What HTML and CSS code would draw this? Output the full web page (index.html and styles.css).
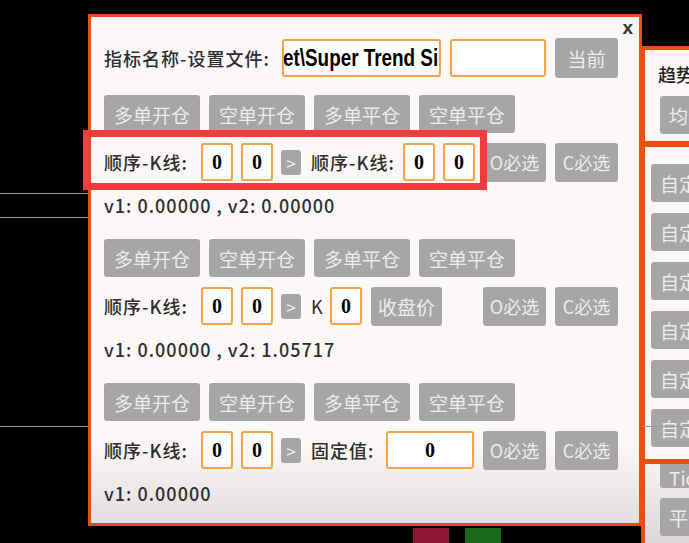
FILE: index.html
```html
<!DOCTYPE html>
<html lang="zh">
  <head>
    <meta charset="UTF-8" />
    <meta name="viewport" content="width=device-width, initial-scale=1.0" />
    <title>信号设置</title>
    <link rel="stylesheet" href="styles.css">
  </head>
  <body>
    <div class="grid-line gl-a"></div>
    <div class="grid-line gl-b"></div>
    <div class="grid-line gl-c"></div>
    <div class="candle down"></div>
    <div class="candle up"></div>

    <aside class="side side-top">
      <p class="side-title">趋势</p>
      <button class="btn side-btn">均线</button>
    </aside>

    <aside class="side side-mid">
      <button class="btn side-btn">自定义1</button>
      <button class="btn side-btn">自定义2</button>
      <button class="btn side-btn">自定义3</button>
      <button class="btn side-btn">自定义4</button>
      <button class="btn side-btn">自定义5</button>
      <button class="btn side-btn">自定义6</button>
    </aside>

    <aside class="side side-low">
      <button class="btn side-btn cut">Tick</button>
      <button class="btn side-btn">平仓</button>
    </aside>

    <main class="dlg">
      <span class="close">x</span>

      <div class="row head">
        <label class="lbl">指标名称-设置文件:</label>
        <div class="field path"><span>Market\Super Trend Signal</span></div>
        <div class="field blank"></div>
        <button class="btn">当前</button>
      </div>

      <section class="sec">
        <div class="row acts">
          <button class="btn act">多单开仓</button>
          <button class="btn act">空单开仓</button>
          <button class="btn act">多单平仓</button>
          <button class="btn act">空单平仓</button>
        </div>
        <div class="row cond">
          <label class="lbl seq">顺序-K线:</label>
          <div class="field num">0</div>
          <div class="field num">0</div>
          <button class="btn op">&gt;</button>
          <label class="lbl seq2">顺序-K线:</label>
          <div class="field num">0</div>
          <div class="field num">0</div>
          <button class="btn pick push">O必选</button>
          <button class="btn pick">C必选</button>
        </div>
        <p class="vals">v1: 0.00000 , v2: 0.00000</p>
      </section>

      <section class="sec">
        <div class="row acts">
          <button class="btn act">多单开仓</button>
          <button class="btn act">空单开仓</button>
          <button class="btn act">多单平仓</button>
          <button class="btn act">空单平仓</button>
        </div>
        <div class="row cond">
          <label class="lbl seq">顺序-K线:</label>
          <div class="field num">0</div>
          <div class="field num">0</div>
          <button class="btn op">&gt;</button>
          <label class="lbl kk">K</label>
          <div class="field num">0</div>
          <button class="btn close-price">收盘价</button>
          <button class="btn pick push">O必选</button>
          <button class="btn pick">C必选</button>
        </div>
        <p class="vals">v1: 0.00000 , v2: 1.05717</p>
      </section>

      <section class="sec">
        <div class="row acts">
          <button class="btn act">多单开仓</button>
          <button class="btn act">空单开仓</button>
          <button class="btn act">多单平仓</button>
          <button class="btn act">空单平仓</button>
        </div>
        <div class="row cond">
          <label class="lbl seq">顺序-K线:</label>
          <div class="field num">0</div>
          <div class="field num">0</div>
          <button class="btn op">&gt;</button>
          <label class="lbl fixed">固定值:</label>
          <div class="field num wide">0</div>
          <button class="btn pick push">O必选</button>
          <button class="btn pick">C必选</button>
        </div>
        <p class="vals">v1: 0.00000</p>
      </section>
    </main>

    <div class="mark"></div>
  </body>
</html>
```

FILE: styles.css
```css
* {
  margin: 0;
  padding: 0;
  box-sizing: border-box;
}

body {
  background-color: #000;
  width: 689px;
  height: 543px;
  overflow: hidden;
  position: relative;
  font-family: "Noto Sans CJK SC", "Noto Sans", sans-serif;
  color: #2b2b2b;
}

/* chart behind the windows */
.grid-line {
  position: absolute;
  left: 0;
  height: 1px;
  background-color: #9c9c9c;
}

.gl-a {
  top: 193px;
  width: 90px;
}

.gl-b {
  top: 217px;
  width: 90px;
}

.gl-c {
  top: 426px;
  width: 689px;
  z-index: 2;
}

.candle {
  position: absolute;
  top: 528px;
  width: 36px;
  height: 20px;
}

.candle.down {
  left: 413px;
  background-color: #8c1535;
}

.candle.up {
  left: 465px;
  background-color: #1b6a1b;
}

/* shared button */
.btn {
  border: none;
  outline: none;
  background-color: #a6a6a6;
  color: #ededed;
  font-family: inherit;
  font-size: 18px;
  border-radius: 3px;
  display: flex;
  align-items: center;
  justify-content: center;
  flex-shrink: 0;
  white-space: nowrap;
}

/* right side windows */
.side {
  position: absolute;
  left: 641px;
  width: 80px;
  border: 4px solid #ef4c12;
  background-color: #fcf7f7;
  display: flex;
  flex-direction: column;
  z-index: 1;
}

.side-top {
  top: 46px;
  height: 99px;
  padding: 12px 0 0 13px;
}

.side-title {
  font-size: 18px;
  font-weight: 500;
  line-height: 24px;
  color: #222;
  white-space: nowrap;
}

.side-top .side-btn {
  margin: 10px 0 0 2px;
}

.side-btn {
  width: 70px;
  height: 38px;
  justify-content: flex-start;
  padding-left: 9px;
  font-size: 19px;
}

.side-mid {
  top: 143px;
  height: 320px;
  padding: 17px 0 0 6px;
  gap: 11px;
}

.side-low {
  top: 460px;
  height: 90px;
  padding: 0 0 0 15px;
  gap: 10px;
  background: linear-gradient(#f5f1f1, #dcd8d8);
  overflow: hidden;
}

.side-low .cut {
  height: 24px;
  align-items: flex-end;
  line-height: 20px;
  border-radius: 0 0 3px 3px;
}

/* main settings window */
.dlg {
  position: absolute;
  left: 88px;
  top: 14px;
  width: 554px;
  height: 512px;
  border: 3px solid #ef4c12;
  background: linear-gradient(#fdf8f8 84%, #e2dede);
  padding: 21px 21px 0 13px;
  display: flex;
  flex-direction: column;
  z-index: 3;
}

.close {
  position: absolute;
  top: 0;
  right: 6px;
  font: bold 19px "Liberation Sans", sans-serif;
  color: #333;
}

.row {
  display: flex;
  align-items: center;
}

.lbl {
  font-size: 18px;
  font-weight: 500;
  letter-spacing: 1px;
  color: #2e2e2e;
  flex-shrink: 0;
  white-space: nowrap;
}

.field {
  height: 38px;
  border: 2px solid #f3a445;
  border-radius: 3px;
  background-color: #fff;
  flex-shrink: 0;
}

.head {
  height: 40px;
}

.head .lbl {
  width: 178px;
}

.path {
  width: 159px;
  overflow: hidden;
  white-space: nowrap;
  font: bold 23px "Liberation Sans", sans-serif;
  line-height: 34px;
  color: #000;
}

.path span {
  display: inline-block;
  margin-left: -45px;
  transform: scaleX(0.82);
  transform-origin: left center;
}

.blank {
  width: 96px;
  margin-left: 9px;
}

.head .btn {
  width: 63px;
  height: 40px;
  margin-left: 9px;
  font-size: 19px;
}

.sec {
  display: flex;
  flex-direction: column;
  margin-top: 22px;
}

.head + .sec {
  margin-top: 17px;
}

.acts {
  gap: 9px;
}

.act {
  width: 96px;
  height: 38px;
  font-size: 19px;
}

.cond {
  margin-top: 10px;
  height: 38px;
}

.seq {
  width: 97px;
}

.seq2 {
  width: 92px;
}

.kk {
  width: 19px;
  font-weight: 400;
}

.fixed {
  width: 75px;
}

.num {
  width: 32px;
  margin-right: 8px;
  display: flex;
  align-items: center;
  justify-content: center;
  font: bold 20px "Liberation Serif", serif;
  color: #000;
}

.num.wide {
  width: 88px;
}

.op {
  width: 20px;
  height: 25px;
  margin-right: 10px;
  font-size: 17px;
}

.close-price {
  width: 71px;
  height: 39px;
  margin-left: 1px;
  font-size: 19px;
}

.pick {
  width: 63px;
  height: 39px;
  font-size: 18px;
}

.pick + .pick {
  margin-left: 9px;
}

.push {
  margin-left: auto;
}

.vals {
  margin-top: 12px;
  font-size: 18px;
  font-weight: 500;
  letter-spacing: 1px;
  line-height: 24px;
  color: #2e2e2e;
}

/* red highlight drawn over the window */
.mark {
  position: absolute;
  left: 83px;
  top: 130px;
  width: 404px;
  height: 60px;
  border: 7px solid #f43c3c;
  z-index: 4;
}
```
